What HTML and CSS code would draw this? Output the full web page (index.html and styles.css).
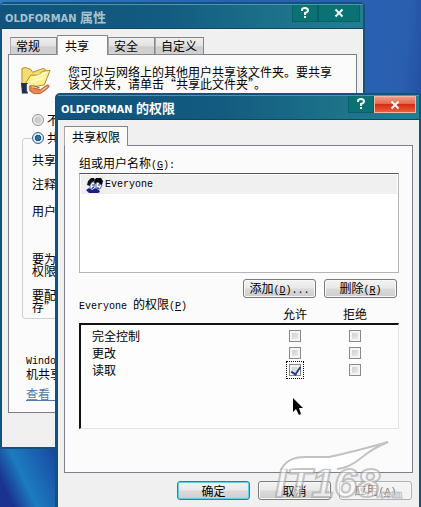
FILE: index.html
```html
<!DOCTYPE html>
<html lang="zh-CN">
<head>
	<meta charset="utf-8">
	<title>OLDFORMAN 的权限</title>
	<link rel="stylesheet" href="styles.css">
</head>
<body>
	<!-- folder properties -->
	<section class="window properties">
		<header class="titlebar">
			<h1>OLDFORMAN <span class="zh">属性</span></h1>
			<div class="controls">
				<button class="help" aria-label="帮助"><svg viewBox="0 0 10 12"><path d="M2 4V3Q2 1 5 1T8 3.500Q8 5 5 6V8M5 9V11"/></svg></button>
				<button class="close" aria-label="关闭"><svg viewBox="0 0 10 12"><path d="M1.500 2.500L8.500 9.500M8.500 2.500L1.500 9.500"/></svg></button>
			</div>
		</header>
		<div class="client">
			<nav class="tabs">
				<button class="tab">常规</button>
				<button class="tab active">共享</button>
				<button class="tab">安全</button>
				<button class="tab">自定义</button>
			</nav>
			<div class="panel">
				<div class="intro">
					<svg class="folder" viewBox="0 0 32 30">
						<path d="M1 20V2L4 1L10 3L12 6L23 2L25 3V17L7 21Z" fill="#f3dc70" stroke="#b28b20"/>
						<path d="M3 20L10 9L18 9L22 5L30 4L24 19L8 22Z" fill="#fff08e" stroke="#b08a1b"/>
						<path d="M12 12L27 6M10 16L25 11" stroke="#fff9c4" stroke-width="2" fill="none"/>
						<path d="M0 17H7V28H1Z" fill="#292b4a"/>
						<path d="M6 18H9V26H6Z" fill="#edf0f8"/>
						<path d="M9 20L14 20L19 22H13L20 24L27 19Q31 19 27 23L20 28H13L9 25Z" fill="#e98648" stroke="#8e3c20" stroke-width=".7"/>
						<path d="M11 21L17 22M21 25L27 21" stroke="#ffd1a2" fill="none"/>
					</svg>
					<p>您可以与网络上的其他用户共享该文件夹。要共享<br>该文件夹，请单击“共享此文件夹”。</p>
				</div>
				<label class="radio"><input type="radio" name="share">不</label>
				<fieldset>
					<legend><label class="radio"><input type="radio" name="share" checked>共</label></legend>
					<p>共享</p>
					<p>注释</p>
					<p class="users">用户</p>
					<p class="hint">要为<br>权限</p>
					<p>要配<br>存”</p>
				</fieldset>
				<p class="firewall"><span class="en">Windo</span><br>机共享</p>
				<a class="link" href="#">查看&nbsp;&nbsp;&nbsp;</a>
			</div>
		</div>
	</section>

	<!-- share permissions -->
	<section class="window permissions">
		<header class="titlebar">
			<h1>OLDFORMAN <span class="zh">的权限</span></h1>
			<div class="controls">
				<button class="help" aria-label="帮助"><svg viewBox="0 0 10 12"><path d="M2 4V3Q2 1 5 1T8 3.500Q8 5 5 6V8M5 9V11"/></svg></button>
				<button class="close" aria-label="关闭"><svg viewBox="0 0 10 12"><path d="M1.500 2.500L8.500 9.500M8.500 2.500L1.500 9.500"/></svg></button>
			</div>
		</header>
		<div class="client">
			<nav class="tabs">
				<button class="tab active">共享权限</button>
			</nav>
			<div class="panel">
				<div class="list-label" id="group-label">组或用户名称<span class="en">(<u>G</u>):</span></div>
				<ul class="users-list" aria-labelledby="group-label">
					<li>
						<svg viewBox="0 0 17 16">
							<path d="M1 8L2 4L5 1H8L9 3L7 5L4 9Z" fill="#101018"/>
							<path d="M4 8L6 5H9L8 10L6 12L4 11Z" fill="#f2f5fa" stroke="#182878" stroke-width=".6"/>
							<path d="M8 4L10 1H15L17 4L16 8H14L12 5L9 7Z" fill="#080810"/>
							<path d="M10 6L12 5L14 7L16 8L14 12L10 11Z" fill="#f6f7fa" stroke="#182878" stroke-width=".7"/>
							<path d="M0 13L3 11L6 13L9 11L13 13L14 15L12 16H3Z" fill="#182090"/>
							<path d="M6 8H8M12 8H14M6 11L8 10M11 11H13" stroke="#1c2b78"/>
						</svg>
						<span class="en">Everyone</span>
					</li>
				</ul>
				<div class="actions">
					<button class="btn">添加<span class="en">(<u>D</u>)...</span></button>
					<button class="btn">删除<span class="en">(<u>R</u>)</span></button>
				</div>
				<table>
					<thead>
						<tr>
							<th class="name"><span class="en">Everyone </span>的权限<span class="en">(<u>P</u>)</span></th>
							<th class="check">允许</th>
							<th class="check">拒绝</th>
							<th class="end"></th>
						</tr>
					</thead>
					<tbody>
						<tr>
							<td>完全控制</td>
							<td><input type="checkbox" aria-label="完全控制 允许"></td>
							<td><input type="checkbox" aria-label="完全控制 拒绝"></td>
							<td></td>
						</tr>
						<tr>
							<td>更改</td>
							<td><input type="checkbox" aria-label="更改 允许"></td>
							<td><input type="checkbox" aria-label="更改 拒绝"></td>
							<td></td>
						</tr>
						<tr>
							<td>读取</td>
							<td><input class="focused" type="checkbox" aria-label="读取 允许" checked></td>
							<td><input type="checkbox" aria-label="读取 拒绝"></td>
							<td></td>
						</tr>
						<tr class="filler"><td></td><td></td><td></td><td></td></tr>
					</tbody>
				</table>
			</div>
			<footer>
				<button class="btn default">确定</button>
				<button class="btn">取消</button>
				<button class="btn" disabled>应用<span class="en">(<u>A</u>)</span></button>
			</footer>
		</div>
	</section>

	<svg class="cursor" viewBox="0 0 10 18"><path d="M0 0V14L3 11L6 17L8 16L6 10H10Z"/></svg>

	<svg class="watermark" viewBox="0 0 140 64">
		<text x="0" y="56" class="big">IT168</text>
		<text x="101" y="57" class="small">.com</text>
		<path d="M6 29Q12 16 30 16H54Q82 10 113 1Q98 7 86 17Q70 29 52 28Q30 25 6 29Z" class="swoosh"/>
		<path d="M6 29Q12 16 30 16H54Q82 10 113 1Q98 7 86 17Q74 27 62 28" class="edge"/>
	</svg>
</body>
</html>
```

FILE: styles.css
```css
* {
	box-sizing: border-box;
}

body {
	position: relative;
	height: 100vh;
	margin: 0;
	overflow: hidden;
	font-family: "Noto Sans CJK SC", sans-serif;
	font-size: 12px;
	line-height: 12px;
	color: #000;
	background:
		linear-gradient(65deg, #1a3290 15%, #1c7cbe 42%, #1b5fb0 70%, #1a3f98 100%) left bottom / 60px 60px no-repeat,
		linear-gradient(95deg, #2f7cc0 0%, #2863b3 50%, #2a5fb0 88%, #1f4a9c 94%, #2a5cb0 100%);
}

p, h1, ul {
	margin: 0;
	padding: 0;
}

button, input {
	margin: 0;
	padding: 0;
	font: inherit;
	color: inherit;
}

.en {
	font-family: "Liberation Mono", monospace;
	font-size: 10px;
}

/* windows */
.window {
	position: absolute;
	border: 2px solid #14527a;
	border-radius: 5px 5px 0 0;
	background: #f0f0f0;
}

.properties {
	top: 2px;
	left: 0;
	right: 56px;
	height: 447px;
}

.permissions {
	top: 93px;
	left: 55px;
	right: 0;
	height: 430px;
	border-left-width: 3px;
}

.titlebar {
	display: flex;
	justify-content: space-between;
	height: 25px;
	padding-left: 3px;
	border-top: 1px solid #4c97ae;
	border-bottom: 1px solid #0c4764;
	background: linear-gradient(90deg, #11537d 0%, #135b80 45%, #1c7189 75%, #247e91 100%);
}

.titlebar h1 {
	font-family: "DejaVu Sans Condensed", "DejaVu Sans", sans-serif;
	font-size: 11px;
	font-weight: bold;
	line-height: 24px;
	color: #fff;
}

.titlebar .zh {
	font-family: "Noto Sans CJK SC", sans-serif;
	font-size: 13px;
}

.properties h1 {
	color: #a9c2d0;
}

.controls {
	display: flex;
	height: 17px;
	margin-right: 3px;
}

.controls button {
	width: 26px;
	border: 1px solid #0d5d69;
	border-top: 0;
	background: #0b7273;
}

.controls .close {
	width: 42px;
}

.controls svg {
	display: block;
	width: 10px;
	height: 12px;
	margin: 0 auto;
}

.controls path {
	fill: none;
	stroke: #f2fafa;
	stroke-width: 2;
}

.permissions .close {
	border: 1px solid #f1b9a5;
	background: linear-gradient(#ee9b86 0%, #e26850 45%, #d52c12 50%, #ed5d3b 100%);
}

.client {
	padding: 6px;
}

/* tabs */
.tabs {
	position: relative;
	display: flex;
	align-items: flex-end;
	height: 20px;
	margin-bottom: -1px;
}

.tab {
	height: 18px;
	padding: 0 16px 0 5px;
	border: 1px solid #85858a;
	border-left-color: #aaa;
	background: linear-gradient(#eee 0%, #e2e2e2 50%, #cdcdcd 55%, #d2d2d2 100%);
}

.tab:last-child {
	padding-right: 6px;
}

.tab.active {
	height: 20px;
	border-bottom: 0;
	background: #fbfbfb;
}

.properties .tabs {
	padding-left: 2px;
}

.properties .active {
	padding: 0 18px 0 7px;
}

.permissions .active {
	padding: 0 7px;
}

.panel {
	border: 1px solid #7c7f85;
	background: #fbfbfb;
}

/* sharing page */
.properties .panel {
	height: 359px;
	padding: 11px 12px;
}

.intro {
	display: flex;
	gap: 16px;
	margin-bottom: 18px;
	white-space: nowrap;
}

.folder {
	width: 31px;
	height: 30px;
}

.radio {
	display: flex;
	align-items: center;
	gap: 3px;
	height: 12px;
	margin-left: 11px;
}

.radio input {
	appearance: none;
	width: 12px;
	height: 12px;
	border: 1px solid #8b8f92;
	border-radius: 50%;
	background: radial-gradient(#ccc 40%, #eee 60%);
}

.radio input:checked {
	border-color: #375e82;
	background: radial-gradient(#2e6fa5 0 25%, #174c78 40%, #d7e8f3 50%);
}

fieldset {
	height: 187px;
	margin: 6px 0 0 1px;
	padding: 10px 9px 0;
	border: 1px solid #d0d0d0;
	border-radius: 3px;
}

legend {
	padding: 0;
}

legend .radio {
	margin-left: 0;
}

fieldset p {
	margin-bottom: 12px;
}

fieldset .users {
	margin: 15px 0 36px;
}

.firewall {
	margin: 34px 0 8px 5px;
}

.link {
	margin-left: 5px;
	color: #5278ad;
}

/* permissions page */
.permissions .panel {
	height: 328px;
	padding: 11px 13px 0 14px;
}

.list-label {
	height: 16px;
}

.users-list {
	height: 100px;
	padding: 1px;
	border: 1px solid #b5b5b5;
	border-top-color: #555;
	background: #fff;
	list-style: none;
}

.users-list li {
	display: flex;
	align-items: center;
	gap: 2px;
	height: 19px;
	padding-left: 5px;
	background: #f0f0f0;
}

.users-list svg {
	width: 17px;
	height: 16px;
}

.actions {
	display: flex;
	justify-content: flex-end;
	gap: 8px;
	margin: 6px 2px 0 0;
}

.btn {
	width: 73px;
	height: 19px;
	border: 1px solid #7b7b7b;
	border-radius: 3px;
	background: linear-gradient(#f3f3f3 0%, #e9e9e9 48%, #dadada 52%, #cdcdcd 100%);
	box-shadow: inset 0 0 0 1px #f7f7f7;
	line-height: 15px;
}

.btn.default {
	border-color: #3d7b94;
	box-shadow: inset 0 0 0 1px #5fd0e4;
}

.btn:disabled {
	border-color: #b0b0b0;
	color: #777;
	background: #f3f3f3;
}

table {
	width: 100%;
	border-collapse: separate;
	border-spacing: 0;
	table-layout: fixed;
}

th {
	height: 25px;
	padding: 0;
	font-weight: normal;
	vertical-align: bottom;
}

th.name {
	text-align: left;
	vertical-align: top;
}

th.check {
	width: 60px;
	padding-bottom: 3px;
}

th.end {
	width: 14px;
}

td {
	height: 17px;
	padding: 0;
	background: #fdfdfd;
	text-align: center;
}

td:first-child {
	padding-left: 11px;
	border-left: 2px solid #111;
	text-align: left;
}

td:last-child {
	border-right: 1px solid #e2e2e2;
}

tbody tr:first-child td {
	height: 21px;
	padding-top: 2px;
	border-top: 2px solid #111;
}

.filler td {
	height: 51px;
	border-bottom: 1px solid #e2e2e2;
}

input[type="checkbox"] {
	display: block;
	appearance: none;
	width: 12px;
	height: 12px;
	margin: 0 auto;
	border: 1px solid #87898b;
	background: linear-gradient(135deg, #c5c8cb, #f1f1f1);
	box-shadow: inset 0 0 0 2px #f5f5f5;
}

input[type="checkbox"].focused {
	outline: 1px dotted #000;
	outline-offset: 2px;
}

input[type="checkbox"]:checked::before {
	content: "";
	display: block;
	width: 4px;
	height: 8px;
	margin: 0 0 0 3px;
	border: solid #263e87;
	border-width: 0 2px 2px 0;
	transform: rotate(35deg);
}

footer {
	display: flex;
	justify-content: flex-end;
	gap: 8px;
	padding: 8px 1px 0 0;
}

/* pointer and site mark lie over the windows */
.cursor {
	position: absolute;
	top: 398px;
	left: 293px;
	width: 10px;
	height: 18px;
}

.watermark {
	position: absolute;
	right: 6px;
	top: 441px;
	width: 140px;
	height: 64px;
	pointer-events: none;
}

.swoosh {
	fill: #fff;
	fill-opacity: .9;
}

.edge {
	fill: none;
	stroke: #aaa;
	stroke-opacity: .7;
	stroke-width: 2;
}

.big {
	font: italic bold 41px "Liberation Sans", sans-serif;
	fill: #fff;
	fill-opacity: .5;
	stroke: #999;
	stroke-opacity: .55;
	stroke-width: 2;
}

.small {
	font: bold 13px "Liberation Serif", serif;
	fill: #fff;
	fill-opacity: .7;
	stroke: #999;
	stroke-opacity: .6;
}
```
